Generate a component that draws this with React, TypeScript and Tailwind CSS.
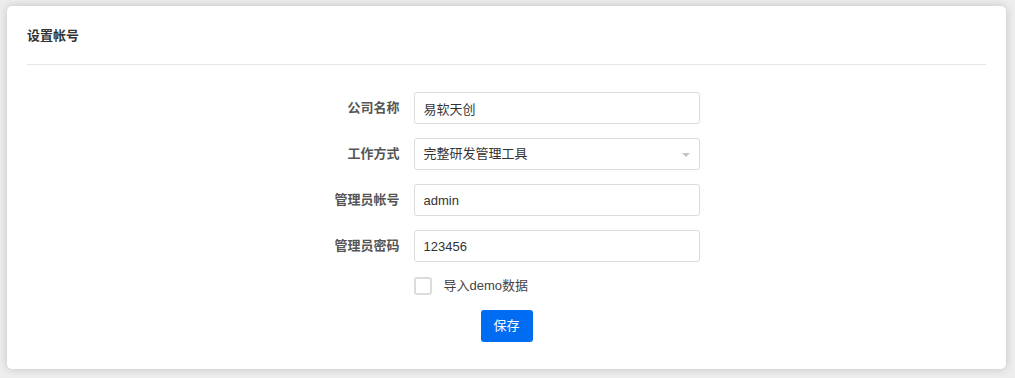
const font = { fontFamily: '"Liberation Sans", "Noto Sans CJK SC", sans-serif' };

const Field = ({ label, children }: { label: string; children: React.ReactNode }) => (
    <div className="flex items-center gap-[14px]">
        <label className="w-[86px] text-right text-[13px] font-bold text-[#555]">{label}</label>
        {children}
    </div>
);

const TextInput = ({ value }: { value: string }) => (
    <input
        defaultValue={value}
        className="w-[286px] h-[32px] rounded-[3px] border border-[#dcdcdc] bg-white px-[9px] text-[13px] text-[#333] outline-none"
        style={font}
    />
);

export default function App() {
    return (
        <div className="h-[378px] bg-[#ededed] pt-[6px] pl-[7px] pr-[9px] pb-[9px]" style={font}>
            <div className="h-full rounded-[5px] bg-white shadow-[0_0_8px_rgba(0,0,0,0.18)] px-[20px]">
                <div className="h-[59px] flex items-center border-b border-[#e5e5e5] pt-[2px]">
                    <h2 className="text-[13px] font-bold text-[#333]">设置帐号</h2>
                </div>

                <div className="flex flex-col items-center pt-[27px]">
                    <div className="flex flex-col gap-[14px]">
                        <Field label="公司名称">
                            <TextInput value="易软天创" />
                        </Field>
                        <Field label="工作方式">
                            <div className="relative w-[286px] h-[32px] rounded-[3px] border border-[#dcdcdc] bg-white px-[9px] flex items-center text-[13px] text-[#333]">
                                完整研发管理工具
                                <span className="absolute right-[9px] top-[14px] w-0 h-0 border-l-[4px] border-r-[4px] border-t-[4px] border-l-transparent border-r-transparent border-t-[#c4c4c4]" />
                            </div>
                        </Field>
                        <Field label="管理员帐号">
                            <TextInput value="admin" />
                        </Field>
                        <Field label="管理员密码">
                            <TextInput value="123456" />
                        </Field>
                        <div className="flex items-center gap-[14px]">
                            <span className="w-[86px]" />
                            <label className="flex items-center gap-[12px] text-[13px] text-[#444]">
                                <span className="w-[18px] h-[18px] rounded-[3px] border-2 border-[#dcdcdc] bg-white" />
                                导入demo数据
                            </label>
                        </div>
                    </div>
                    <button className="mt-[14px] w-[52px] h-[32px] rounded-[3px] bg-[#006cf2] text-white text-[13px]" style={font}>
                        保存
                    </button>
                </div>
            </div>
        </div>
    );
}
